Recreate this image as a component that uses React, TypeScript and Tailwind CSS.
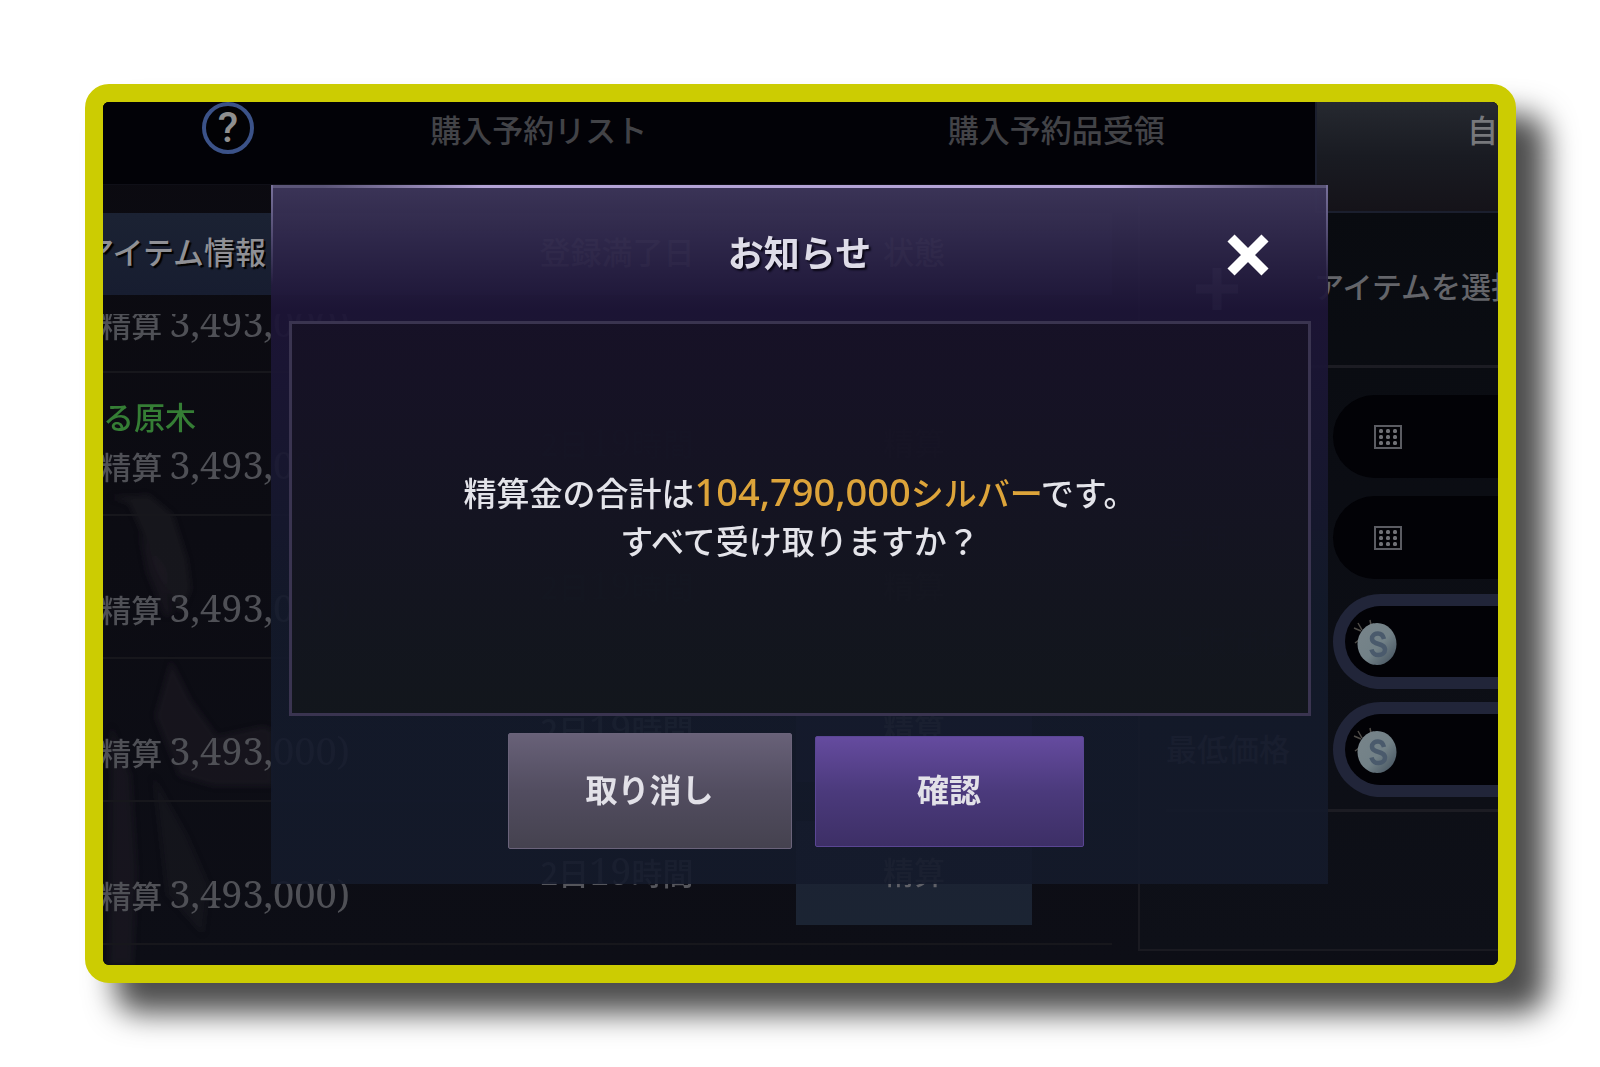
import React from "react";

const rows = [
  { id: "r1", name: "る原木" },
  { id: "r2", name: "" },
  { id: "r3", name: "" },
  { id: "r4", name: "" },
];

function Amount() {
  return (
    <div className="flex w-[247px] justify-end overflow-hidden whitespace-nowrap text-[31px] leading-[48px] font-medium text-[#4f5056]">
      <span>
        精算 <span className="font-['Noto_Serif','Liberation_Serif',serif] text-[38px] font-normal">3,493,000)</span>
      </span>
    </div>
  );
}

function KeypadIcon() {
  return (
    <svg width="28" height="24" viewBox="0 0 28 24" fill="none" aria-hidden="true" className="shrink-0">
      <rect x="1" y="1" width="26" height="22" stroke="#5b5c62" strokeWidth="2" />
      {[6, 12, 18].map((y) =>
        [7, 14, 21].map((x) => <rect key={`${x}-${y}`} x={x - 2} y={y - 2} width="4" height="4" rx="1.500" fill="#707176" />),
      )}
    </svg>
  );
}

function CoinIcon() {
  return (
    <svg width="44" height="48" viewBox="0 0 44 48" fill="none" aria-hidden="true" className="shrink-0">
      <defs>
        <linearGradient id="coin" x1="0" y1="0" x2="1" y2="1">
          <stop offset="0" stopColor="#78848a" />
          <stop offset="0.55" stopColor="#728187" />
          <stop offset="1" stopColor="#3f4d5a" />
        </linearGradient>
      </defs>
      <path d="M1 10l7 3M5 5l4 7M17 2l1 5M2 25l4-3" stroke="#4f4c48" strokeWidth="1.500" />
      <ellipse cx="24" cy="26" rx="19.500" ry="21" fill="url(#coin)" />
      <path
        d="M31 21c-1-4-3-5.500-6-5.500-3.500 0-6 2-6 5 0 7 13 4 13 11 0 3.500-3 5.500-6.500 5.500s-6-2-7-5.500"
        stroke="#4a5a6c"
        strokeWidth="4.500"
      />
    </svg>
  );
}

function Field({ id, label, coin }: { id: string; label: string; coin?: boolean }) {
  return (
    <div className="flex items-center">
      <label htmlFor={id} className="w-[167px] shrink-0 pb-1 text-[31px] leading-[48px] font-medium text-[#4f5057]">
        {label}
      </label>
      <div
        className={
          coin
            ? "flex h-[95px] min-w-0 flex-1 items-center rounded-l-full border-[12px] border-r-0 border-[#212539] bg-[#020206] pl-2"
            : "flex h-[83px] min-w-0 flex-1 items-center rounded-l-full bg-[#020206] pl-[41px]"
        }
      >
        {coin ? <CoinIcon /> : <KeypadIcon />}
        <input id={id} className="min-w-0 flex-1 bg-transparent text-[31px] text-[#8a8b90] outline-none" />
      </div>
    </div>
  );
}

function Backdrop() {
  return (
    <svg
      className="absolute bottom-0 left-0 h-[560px] w-[170px]"
      viewBox="0 0 170 560"
      preserveAspectRatio="none"
      aria-hidden="true"
    >
      <defs>
        <filter id="haze" x="-20%" y="-20%" width="140%" height="140%">
          <feGaussianBlur stdDeviation="3" />
        </filter>
      </defs>
      <g fill="#4b414c" filter="url(#haze)">
        <path d="M6 92l40-2 24 20 14 44 4 30-10 24-16-28-20-46-16-36z" opacity="0.18" />
        <path d="M36 128l24 36 10 44-8 4-18-44z" opacity="0.14" />
        <path d="M68 255l20 40 26 36 46-10 10 4v56l-60 0-34-10-24-60z" opacity="0.16" />
        <path d="M8 320l20 50 6 96-4 94H6z" opacity="0.14" />
        <path d="M50 370l34 60 22 50-6 50-36-40z" opacity="0.12" />
      </g>
    </svg>
  );
}

export default function App() {
  return (
    <div className="bg-white px-[84px] pt-[84px] pb-[84px] pl-[85px] font-['Noto_Sans_CJK_JP',sans-serif]">
      <main className="relative overflow-hidden rounded-[24px] border-[18px] border-[#cccc02] bg-[#0c0c13] shadow-[30px_30px_30px_rgba(0,0,0,0.7)]">
        <div className="relative bg-linear-to-b from-[#0b0a10] to-[#0d0e16]">
          <Backdrop />

          <nav className="relative z-10 flex h-[83px] border-b border-[#0f0f17] bg-[#020207] text-[31px] leading-[54px] font-medium text-[#424347]">
            <div className="w-[177px] shrink-0">
              <button
                aria-label="ヘルプ"
                className="ml-[99px] flex size-[52px] items-center justify-center rounded-full border-4 border-[#3b5288] bg-[#020205] font-['Roboto',sans-serif] text-[42px] leading-none font-medium text-[#8f8f8f]"
              >
                ?
              </button>
            </div>
            <button className="flex-1 self-start">購入予約リスト</button>
            <button className="flex-1 self-start">購入予約品受領</button>
            <button className="flex h-[111px] w-[183px] shrink-0 justify-end border-b-2 border-l-2 border-[#1b1f2e] bg-linear-to-b from-[#262930] via-[#191b22] to-[#151319] text-[#77787c]">
              自
            </button>
          </nav>

          <div className="relative flex h-[780px]">
            <section className="min-w-0 flex-1 overflow-hidden pt-7 pr-[26px]">
              <table className="w-full table-fixed border-collapse">
                <thead>
                  <tr className="h-[82px] bg-linear-to-b from-[#1b2233] to-[#171d30] text-[31px] leading-[48px] text-[#8f9095]">
                    <th className="p-0 pb-[6px] font-medium">
                      <div className="flex w-[163px] justify-end overflow-hidden whitespace-nowrap text-shadow-[2px_2px_1px_#000000]">
                        アイテム情報
                      </div>
                    </th>
                    <th className="w-[198px] p-0 pb-[6px] font-medium">登録満了日</th>
                    <th className="w-[396px] p-0 pb-[6px] font-medium">状態</th>
                  </tr>
                </thead>
                <tbody className="text-[31px] leading-[48px] font-medium">
                  <tr className="h-[77px] border-b-2 border-[#17171c]">
                    <td className="p-0 align-top" colSpan={3}>
                      <div className="mt-[19px] h-[48px] overflow-hidden">
                        <div className="-mt-4">
                          <Amount />
                        </div>
                      </div>
                    </td>
                  </tr>
                  {rows.map((row) => (
                    <tr key={row.id} className="h-[143px] border-b-2 border-[#17171c]">
                      <td className="p-0 pb-6 align-bottom">
                        <div className="text-[#357e35]">{row.name}</div>
                        <Amount />
                      </td>
                      <td className="p-0 pb-1 text-center text-[#55565c]">
                        2日<span className="font-['Noto_Serif','Liberation_Serif',serif] text-[38px] font-normal">19</span>時間
                      </td>
                      <td className="p-0 text-center">
                        <button className="h-[104px] w-[236px] bg-linear-to-b from-[#1c2233] to-[#1b2433] pb-1 text-[#606168]">
                          精算
                        </button>
                      </td>
                    </tr>
                  ))}
                </tbody>
              </table>
            </section>

            <section className="mb-[14px] w-[360px] shrink-0 overflow-hidden border-b-2 border-l-2 border-[#1a1a21] bg-linear-to-b from-[#090b10] to-[#0e1018] pt-7 pl-[26px]">
              <button className="flex h-[152px] w-full items-center overflow-hidden text-left text-[30px] leading-[48px] font-medium whitespace-nowrap text-[#64656a]">
                <svg width="42" height="42" viewBox="0 0 42 42" className="mr-[76px] ml-[30px] shrink-0" aria-hidden="true">
                  <path d="M21 0v42M0 21h42" stroke="#6d6e72" strokeWidth="9" />
                </svg>
                <span className="pb-2">アイテムを選択</span>
              </button>
              <div className="flex flex-col gap-[18px] border-y-3 border-[#1c1c23] pt-[27px] pb-3">
                <Field id="amount" label="販売数量" />
                <Field id="unit" label="単価" />
                <div className="-mt-[3px] flex flex-col gap-[13px]">
                  <Field id="max" label="上限価格" coin />
                  <Field id="min" label="最低価格" coin />
                </div>
              </div>
            </section>
          </div>

          <div
            role="dialog"
            aria-labelledby="dialog-title"
            className="absolute top-[83px] right-[170px] left-[168px] z-20 bg-linear-to-b from-[#3d365a]/97 from-0% via-[#1d1537]/95 via-18% to-[#141a2b]/92 to-60% pb-[35px]"
          >
            <div className="flex h-[3px]">
              <div className="flex-1 bg-linear-to-r from-[#5b5578] from-10% to-[#b3a3d6] to-40%" />
              <div className="flex-1 bg-linear-to-l from-[#5b5578] from-10% to-[#b3a3d6] to-40%" />
            </div>
            <div className="pointer-events-none absolute inset-y-0 left-0 h-[100px] w-[2px] bg-linear-to-b from-[#77709a] to-transparent" />
            <div className="pointer-events-none absolute inset-y-0 right-0 h-[100px] w-[2px] bg-linear-to-b from-[#77709a] to-transparent" />
            <header className="grid h-[133px] grid-cols-[1fr_auto_1fr] items-center">
              <h1
                id="dialog-title"
                className="col-start-2 pb-2 text-[36px] leading-[54px] font-bold text-[#dedce8] text-shadow-[2px_2px_2px_#0b0716]"
              >
                お知らせ
              </h1>
              <button aria-label="閉じる" className="mr-[59px] justify-self-end">
                <svg width="42" height="42" viewBox="0 0 42 42" aria-hidden="true">
                  <path d="M4 4l34 34M38 4L4 38" stroke="#ffffff" strokeWidth="10" />
                </svg>
              </button>
            </header>
            <div className="mr-[17px] ml-[18px] flex h-[395px] flex-col items-center justify-center border-3 border-[#3a3450] bg-linear-to-b from-[#161125]/90 to-[#12161b]/90 pb-[6px] text-[33px] leading-[48px] font-medium text-[#e4e4ea]">
              <p>
                精算金の合計は
                <span className="text-[#dda43a]">
                  <span className="font-['Noto_Sans',sans-serif] text-[38px]">104,790,000</span>シルバー
                </span>
                です。
              </p>
              <p>すべて受け取りますか？</p>
            </div>
            <div className="mt-[17px] mr-2 flex items-center justify-center gap-[23px] text-[32px] leading-[48px] font-bold text-[#e2e1e8] text-shadow-[2px_2px_2px_#1a1626]">
              <button className="h-[116px] w-[284px] rounded-xs border border-[#6a637a] bg-linear-to-b from-[#686178] via-[#524d60] to-[#45424f] pb-[6px]">
                取り消し
              </button>
              <button className="h-[111px] w-[269px] rounded-xs border border-[#5a4694] bg-linear-to-b from-[#654b9f] via-[#4b3a7c] to-[#3d2f66] pb-[6px]">
                確認
              </button>
            </div>
          </div>
        </div>
      </main>
    </div>
  );
}
